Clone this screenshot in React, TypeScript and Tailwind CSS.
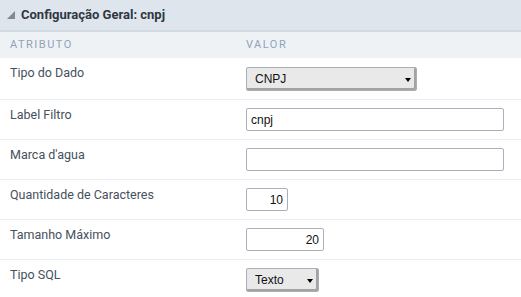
import { ReactNode } from "react";

function Select({ value, width }: { value: string; width: string }) {
  return (
    <div
      className={`relative flex h-[24px] items-center rounded-[2px] border border-[#a9afb8] bg-[#e9e9e9] pl-[8px] text-[12px] text-[#111] shadow-[inset_-2px_-2px_0_#a3a3a3] ${width}`}
      style={{ fontFamily: '"Liberation Sans", Arial, sans-serif' }}
    >
      {value}
      <span className="absolute right-[5px] top-[10px] h-0 w-0 border-x-[3.5px] border-t-[4px] border-x-transparent border-t-black" />
    </div>
  );
}

function Input({ value = "", width, right = false }: { value?: string; width: string; right?: boolean }) {
  return (
    <div
      className={`flex h-[23px] items-center rounded-[2px] border border-[#a9b0bb] bg-white px-[4px] text-[12px] text-[#111] ${right ? "justify-end" : ""} ${width}`}
      style={{ fontFamily: '"Liberation Sans", Arial, sans-serif' }}
    >
      {value}
    </div>
  );
}

function Row({ label, first = false, children }: { label: string; first?: boolean; children: ReactNode }) {
  return (
    <div className={`flex border-b border-[#e9edf1] ${first ? "h-[41px]" : "h-[40px]"}`}>
      <div className={`w-[246px] pl-[10px] text-[12.5px] text-[#46505e] ${first ? "pt-[5px]" : "pt-[6px]"}`}>{label}</div>
      <div className="pt-[8px]">{children}</div>
    </div>
  );
}

export default function App() {
  return (
    <div className="h-[297px] w-[521px] overflow-hidden bg-white" style={{ fontFamily: "Roboto, Arial, sans-serif" }}>
      {/* Header */}
      <div className="flex h-[32px] items-center gap-[6px] border-b-[2px] border-[#d2dae2] bg-[#dfe5ec] pl-[7px]">
        <svg width="8" height="8" viewBox="0 0 8 8">
          <polygon points="8,0 8,8 0,8" fill="#7d8996" />
        </svg>
        <span className="text-[13px] font-bold text-[#2e3743]">Configuração Geral: cnpj</span>
      </div>

      {/* Column header */}
      <div className="flex h-[26px] items-center bg-[#eef2f5] text-[11px] tracking-[1.5px] text-[#8fa4b8]">
        <div className="w-[246px] pl-[10px]">ATRIBUTO</div>
        <div>VALOR</div>
      </div>

      <div className="h-[1px]" />

      <Row label="Tipo do Dado" first>
        <Select value="CNPJ" width="w-[171px]" />
      </Row>
      <Row label="Label Filtro">
        <Input value="cnpj" width="w-[258px]" />
      </Row>
      <Row label="Marca d'agua">
        <Input width="w-[258px]" />
      </Row>
      <Row label="Quantidade de Caracteres">
        <Input value="10" width="w-[42px]" right />
      </Row>
      <Row label="Tamanho Máximo">
        <Input value="20" width="w-[78px]" right />
      </Row>
      <Row label="Tipo SQL">
        <Select value="Texto" width="w-[73px]" />
      </Row>
    </div>
  );
}
